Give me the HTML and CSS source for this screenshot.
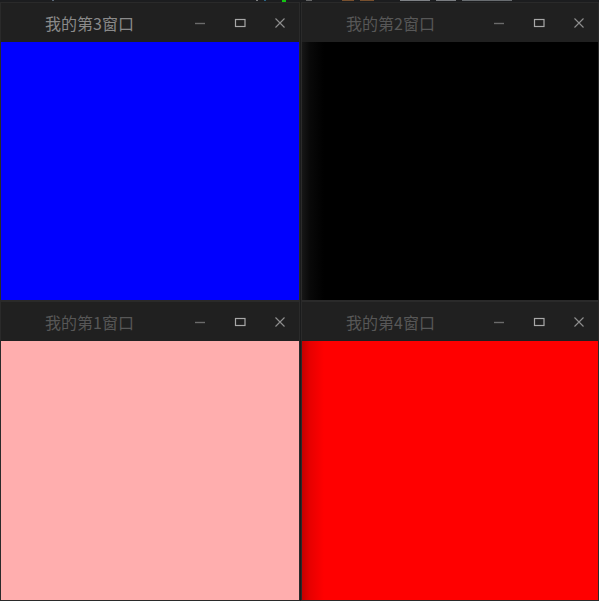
FILE: index.html
```html
<!DOCTYPE html>
<html lang="zh">
<head>
<meta charset="utf-8">
<link rel="stylesheet" href="styles.css">
<title>Windows</title>
</head>
<body>
<div class="editor-strip">
  <i class="bit b1"></i><i class="bit b2"></i><i class="bit b3"></i><i class="bit b4"></i><i class="bit b5"></i><i class="bit b6"></i><i class="bit b7"></i><i class="bit b8"></i><i class="bit b9"></i><i class="bit b10"></i>
</div>
<div class="desk">
  <section class="win">
    <header class="titlebar">
      <span class="title active">我的第3窗口</span>
      <div class="controls">
        <svg class="ic ic-min" width="12" height="12" viewBox="0 0 12 12"><path d="M1 6.5h10" stroke="#6b6b6b" stroke-width="1.4"/></svg>
        <svg class="ic ic-max" width="12" height="12" viewBox="0 0 12 12"><rect x="1.5" y="2.5" width="9.5" height="7" fill="none" stroke="#a8a8a8" stroke-width="1.2"/></svg>
        <svg class="ic ic-close" width="12" height="12" viewBox="0 0 12 12"><path d="M1.5 1.5l9 9M10.5 1.5l-9 9" stroke="#8f8f8f" stroke-width="1.1"/></svg>
      </div>
    </header>
    <div class="content blue"></div>
  </section>
  <section class="win">
    <header class="titlebar">
      <span class="title">我的第2窗口</span>
      <div class="controls">
        <svg class="ic ic-min" width="12" height="12" viewBox="0 0 12 12"><path d="M1 6.5h10" stroke="#6b6b6b" stroke-width="1.4"/></svg>
        <svg class="ic ic-max" width="12" height="12" viewBox="0 0 12 12"><rect x="1.5" y="2.5" width="9.5" height="7" fill="none" stroke="#a8a8a8" stroke-width="1.2"/></svg>
        <svg class="ic ic-close" width="12" height="12" viewBox="0 0 12 12"><path d="M1.5 1.5l9 9M10.5 1.5l-9 9" stroke="#8f8f8f" stroke-width="1.1"/></svg>
      </div>
    </header>
    <div class="content black shaded"></div>
  </section>
  <section class="win">
    <header class="titlebar">
      <span class="title">我的第1窗口</span>
      <div class="controls">
        <svg class="ic ic-min" width="12" height="12" viewBox="0 0 12 12"><path d="M1 6.5h10" stroke="#6b6b6b" stroke-width="1.4"/></svg>
        <svg class="ic ic-max" width="12" height="12" viewBox="0 0 12 12"><rect x="1.5" y="2.5" width="9.5" height="7" fill="none" stroke="#a8a8a8" stroke-width="1.2"/></svg>
        <svg class="ic ic-close" width="12" height="12" viewBox="0 0 12 12"><path d="M1.5 1.5l9 9M10.5 1.5l-9 9" stroke="#8f8f8f" stroke-width="1.1"/></svg>
      </div>
    </header>
    <div class="content pink"></div>
  </section>
  <section class="win">
    <header class="titlebar">
      <span class="title">我的第4窗口</span>
      <div class="controls">
        <svg class="ic ic-min" width="12" height="12" viewBox="0 0 12 12"><path d="M1 6.5h10" stroke="#6b6b6b" stroke-width="1.4"/></svg>
        <svg class="ic ic-max" width="12" height="12" viewBox="0 0 12 12"><rect x="1.5" y="2.5" width="9.5" height="7" fill="none" stroke="#a8a8a8" stroke-width="1.2"/></svg>
        <svg class="ic ic-close" width="12" height="12" viewBox="0 0 12 12"><path d="M1.5 1.5l9 9M10.5 1.5l-9 9" stroke="#8f8f8f" stroke-width="1.1"/></svg>
      </div>
    </header>
    <div class="content red shaded"></div>
  </section>
</div>
</body>
</html>
```

FILE: styles.css
```css
* { box-sizing: border-box; }
html, body {
  margin: 0;
  padding: 0;
  background: #1a1b1c;
  overflow: hidden;
  width: 599px;
  height: 601px;
}
.editor-strip {
  height: 2px;
  display: flex;
  align-items: flex-start;
  gap: 6px;
  padding-left: 52px;
  background: #1c1d1f;
}
.bit { display: block; height: 1px; flex: none; opacity: 0.55; }
.b1 { width: 2px; background: #8ea6c0; margin-right: 196px; }
.b2 { width: 2px; background: #c8c8c8; }
.b3 { width: 2px; background: #3aa0d8; margin-right: 10px; }
.b4 { width: 4px; height: 2px; background: #13c413; margin-right: 14px; opacity: 1; }
.b5 { width: 6px; background: #a0a0a0; margin-right: 24px; }
.b6 { width: 12px; background: #c47a3a; }
.b7 { width: 14px; background: #c47a3a; margin-right: 20px; }
.b8 { width: 30px; background: #cfd3d8; }
.b9 { width: 20px; background: #c8ccd2; }
.b10 { width: 50px; background: #a8adb3; }

.desk {
  display: grid;
  grid-template-columns: 300px 298px;
  grid-template-rows: 299px 300px;
  column-gap: 1px;
}
.win {
  display: flex;
  flex-direction: column;
  border: 1px solid #2a2a2a;
  background: #202020;
  overflow: hidden;
}
.titlebar {
  height: 39px;
  flex: none;
  display: flex;
  align-items: center;
  background: #202020;
  padding-left: 44px;
}
.title {
  font-family: "Noto Sans CJK SC", "Noto Sans", sans-serif;
  font-size: 16px;
  color: #575757;
  flex: 1;
  line-height: 20px;
}
.title.active { color: #8a8a8a; }
.controls {
  display: flex;
  align-items: center;
  gap: 28px;
  padding-right: 13px;
}
.ic { display: block; }
.content { flex: 1; }
.blue { background: #0000ff; }
.black { background: #000000; }
.pink { background: #ffaeae; }
.red { background: #ff0000; }
.black.shaded {
  background: linear-gradient(to right, rgba(70,70,70,0.32), rgba(70,70,70,0.12) 8px, rgba(70,70,70,0) 22px), #000000;
}
.red.shaded {
  background: linear-gradient(to right, rgba(60,0,0,0.3), rgba(60,0,0,0.12) 8px, rgba(60,0,0,0) 22px), #ff0000;
}
```
